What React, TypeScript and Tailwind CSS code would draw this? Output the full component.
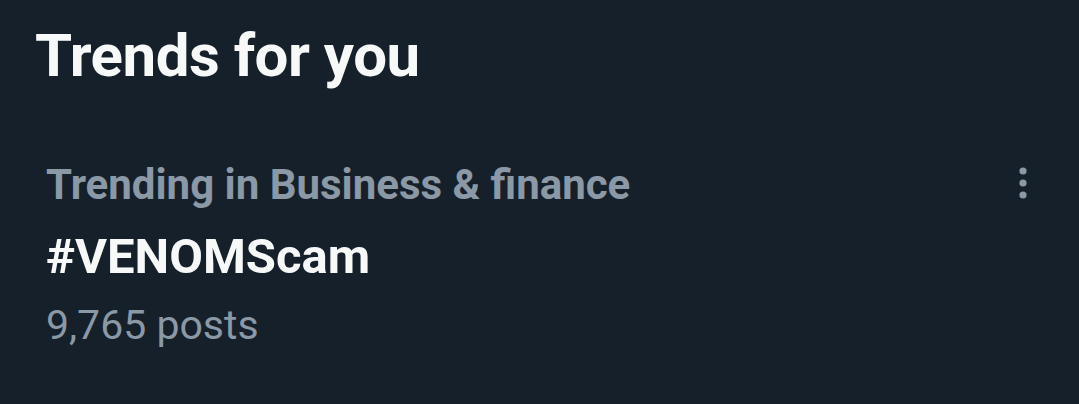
const App = () => {
  return (
    <div
      className="w-[1079px] h-[404px] bg-[#15202b] overflow-hidden"
      style={{ fontFamily: 'Roboto, "Liberation Sans", sans-serif' }}
    >
      <div className="pl-[35px] pt-[22px]">
        <h2 className="text-[60px] leading-[68px] font-bold text-[#f7f9f9] tracking-[-0.5px]">
          Trends for you
        </h2>
      </div>
      <div className="flex flex-row justify-between pl-[46px] pr-[49px] pt-[71px]">
        <div className="flex flex-col">
          <span className="text-[42px] leading-[48px] font-bold text-[#8b98a5]">
            Trending in Business &amp; finance
          </span>
          <span className="mt-[18px] text-[49px] leading-[60px] font-bold text-[#f7f9f9]">
            #VENOMScam
          </span>
          <span className="mt-[13px] text-[41px] leading-[50px] text-[#8b98a5]">
            9,765 posts
          </span>
        </div>
        <svg width="14" height="36" viewBox="0 0 14 36" className="mt-[4px]">
          <circle cx="7" cy="6" r="3.6" fill="#8b98a5" />
          <circle cx="7" cy="18" r="3.6" fill="#8b98a5" />
          <circle cx="7" cy="30" r="3.6" fill="#8b98a5" />
        </svg>
      </div>
    </div>
  );
};

export default App;
